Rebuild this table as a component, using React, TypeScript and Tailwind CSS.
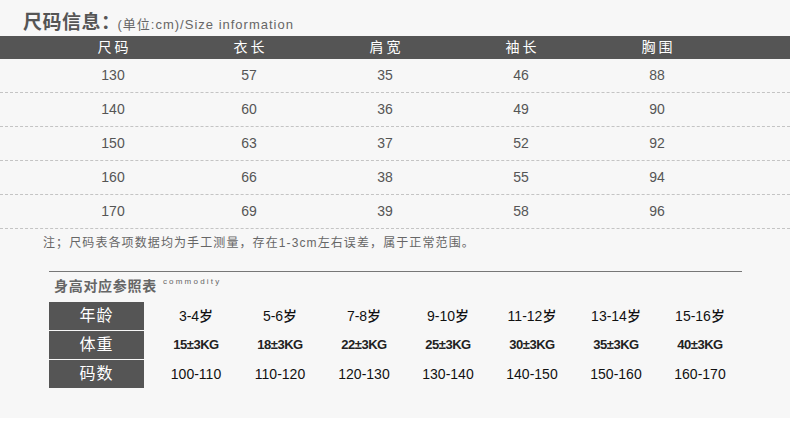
const font = "font-['Liberation_Sans','Noto_Sans_CJK_SC',sans-serif]";

const headers = ["尺码", "衣长", "肩宽", "袖长", "胸围"];

const sizeRows = [
  ["130", "57", "35", "46", "88"],
  ["140", "60", "36", "49", "90"],
  ["150", "63", "37", "52", "92"],
  ["160", "66", "38", "55", "94"],
  ["170", "69", "39", "58", "96"],
];

const refRows = [
  {
    label: "年龄",
    values: ["3-4岁", "5-6岁", "7-8岁", "9-10岁", "11-12岁", "13-14岁", "15-16岁"],
    cls: "text-[14px] font-medium",
  },
  {
    label: "体重",
    values: ["15±3KG", "18±3KG", "22±3KG", "25±3KG", "30±3KG", "35±3KG", "40±3KG"],
    cls: "text-[13px] font-bold tracking-[-0.5px] text-[#222]",
  },
  {
    label: "码数",
    values: ["100-110", "110-120", "120-130", "130-140", "140-150", "150-160", "160-170"],
    cls: "text-[14px]",
  },
];

export default function App() {
  return (
    <div className={`w-[790px] h-[447px] bg-white overflow-hidden ${font}`}>
      <div className="h-[418px] bg-[#f7f7f7]">
        {/* Title */}
        <div className="h-[36px] pl-[23px] pt-[9px] flex items-baseline">
          <span className="text-[19px] font-bold text-[#555] tracking-[0.5px]">尺码信息：</span>
          <span className="-ml-[3px] text-[13px] text-[#666] tracking-[1px]">(单位:cm)/Size information</span>
        </div>

        {/* Header bar */}
        <div className="h-[23px] bg-[#555] pl-[45px] grid grid-cols-[repeat(5,136px)] items-center">
          {headers.map((h) => (
            <div key={h} className="text-center text-white text-[14px] tracking-[3px] pl-[3px]">
              {h}
            </div>
          ))}
        </div>

        {/* Size rows */}
        {sizeRows.map((row, i) => (
          <div
            key={i}
            className="h-[34px] border-b border-dashed border-[#c4c4c4] pl-[45px] grid grid-cols-[repeat(5,136px)] items-center"
          >
            {row.map((v, j) => (
              <div key={j} className="text-center text-[#555] text-[14px]">
                {v}
              </div>
            ))}
          </div>
        ))}

        {/* Note */}
        <div className="pl-[43px] pt-[6px] text-[12px] tracking-[1.1px] text-[#666] leading-[16px]">
          注；尺码表各项数据均为手工测量，存在1-3cm左右误差，属于正常范围。
        </div>

        {/* Reference section */}
        <div className="ml-[49px] w-[693px] mt-[20px] border-t border-[#777]">
          <div className="h-[30px] pl-[5px] flex items-start pt-[4px]">
            <span className="text-[14px] font-bold text-[#666] tracking-[0.7px]">身高对应参照表</span>
            <span className="ml-[6px] text-[8px] text-[#666] tracking-[2.2px] leading-[10px] pt-[1px]">
              commodity
            </span>
          </div>

          <div className="flex flex-col gap-[1px]">
            {refRows.map((r) => (
              <div key={r.label} className="flex items-center h-[28px]">
                <div className="w-[99px] h-full bg-[#555] text-white text-[16px] flex items-center justify-center tracking-[1px]">
                  {r.label}
                </div>
                <div className="ml-[10px] grid grid-cols-[repeat(7,84px)]">
                  {r.values.map((v) => (
                    <div key={v} className={`text-center text-[#111] ${r.cls}`}>
                      {v}
                    </div>
                  ))}
                </div>
              </div>
            ))}
          </div>
        </div>
      </div>
    </div>
  );
}
